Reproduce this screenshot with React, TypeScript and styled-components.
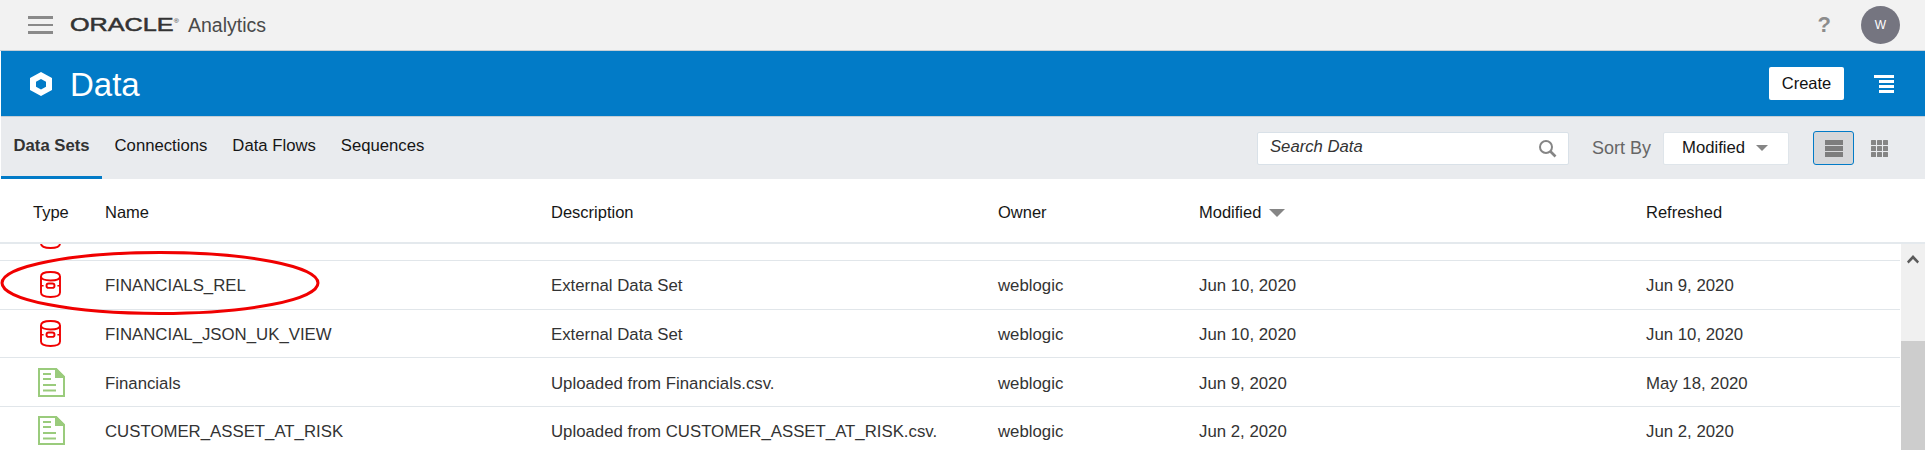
import styled, { createGlobalStyle } from 'styled-components';

const GlobalStyle = createGlobalStyle`
  html, body {
    margin: 0;
    padding: 0;
    height: 450px;
    overflow: hidden;
    background: #fff;
    font-family: "Liberation Sans", Arial, sans-serif;
  }
`;

const Page = styled.div`
  position: relative;
  width: 1925px;
  height: 450px;
  overflow: hidden;
  display: flex;
  flex-direction: column;
`;

const TopBar = styled.header`
  flex: 0 0 50px;
  display: flex;
  align-items: center;
  background: #f2f2f2;
  border-bottom: 1px solid #c4ced6;
  padding: 0 25px 0 28px;
`;

const Burger = styled.div`
  width: 25px;
  display: flex;
  flex-direction: column;
  gap: 5px;
  margin-right: 17px;

  span {
    display: block;
    height: 2.5px;
    background: #8a8a8a;
  }
`;

const OracleMark = styled.span`
  display: inline-block;
  width: 108px;
  font-size: 18px;
  line-height: 20px;
  color: #333;
  -webkit-text-stroke: 0.5px #333;
  transform: scaleX(1.4);
  transform-origin: left center;
  white-space: nowrap;
`;

const Reg = styled.sup`
  font-size: 5px;
  vertical-align: 8px;
  line-height: 0;
  -webkit-text-stroke: 0;
`;

const Product = styled.span`
  margin-left: 10px;
  font-size: 19.5px;
  color: #4a4a4a;
`;

const Help = styled.span`
  margin-left: auto;
  margin-right: 30px;
  font-size: 22px;
  font-weight: bold;
  color: #8c8c8c;
`;

const Avatar = styled.div`
  width: 39px;
  height: 38px;
  border-radius: 50%;
  background: #757580;
  color: #fff;
  font-size: 12px;
  display: flex;
  align-items: center;
  justify-content: center;
`;

const TitleBar = styled.div`
  flex: 0 0 66px;
  display: flex;
  align-items: center;
  background: #027bc7;
  border-bottom: 1px solid #c4ced6;
  box-sizing: border-box;
  padding: 0 31px 0 28px;
  margin-left: 1px;
`;

const Title = styled.h1`
  margin: 2px 0 0 17px;
  font-size: 33px;
  font-weight: normal;
  color: #fff;
`;

const CreateButton = styled.button`
  margin-left: auto;
  margin-right: 30px;
  width: 75px;
  height: 33px;
  padding: 0;
  border: 0;
  border-radius: 2px;
  background: #fff;
  color: #111;
  font-family: inherit;
  font-size: 16.5px;
`;

const TabBar = styled.nav`
  flex: 0 0 62px;
  display: flex;
  align-items: center;
  background: #e9ebee;
  margin-left: 1px;
  padding-right: 25px;
`;

const Tab = styled.a<{ $active?: boolean }>`
  align-self: stretch;
  display: flex;
  align-items: center;
  box-sizing: border-box;
  padding: 0 12.5px 2px;
  font-size: 16.7px;
  font-weight: ${p => (p.$active ? 'bold' : 'normal')};
  color: ${p => (p.$active ? '#333' : '#161616')};
  border-bottom: 3px solid ${p => (p.$active ? '#027bc7' : 'transparent')};
`;

const SearchBox = styled.div`
  margin-left: auto;
  width: 312px;
  height: 33px;
  box-sizing: border-box;
  display: flex;
  align-items: center;
  justify-content: space-between;
  padding: 0 11px 3px 12px;
  background: #fff;
  border: 1px solid #d9e1e8;
  border-radius: 2px;
  font-size: 16.7px;
  font-style: italic;
  color: #333;

  svg {
    margin-top: 3px;
  }
`;

const SortLabel = styled.span`
  margin: 0 12px 0 23px;
  font-size: 18px;
  color: #666;
`;

const SortSelect = styled.div`
  width: 126px;
  height: 33px;
  box-sizing: border-box;
  display: flex;
  align-items: center;
  padding-left: 18px;
  gap: 11px;
  background: #fff;
  border: 1px solid #dfe5ea;
  border-radius: 2px;
  font-size: 16.7px;
  color: #161616;
`;

const Caret = styled.span<{ $size: number; $colour: string }>`
  width: 0;
  height: 0;
  border-left: ${p => p.$size}px solid transparent;
  border-right: ${p => p.$size}px solid transparent;
  border-top: ${p => p.$size}px solid ${p => p.$colour};
`;

const ViewButton = styled.div<{ $active?: boolean }>`
  width: 41px;
  height: 34px;
  box-sizing: border-box;
  display: flex;
  align-items: center;
  justify-content: center;
  border-radius: 3px;
  margin-left: ${p => (p.$active ? '24px' : '5px')};
  background: ${p => (p.$active ? '#d6d7d9' : 'transparent')};
  border: 1px solid ${p => (p.$active ? '#027bc7' : 'transparent')};
`;

const columns = '105px 446px 447px 201px 447px 1fr';

const HeaderRow = styled.div`
  flex: 0 0 65px;
  display: grid;
  grid-template-columns: ${columns};
  align-items: center;
  box-sizing: border-box;
  padding-top: 4px;
  border-bottom: 2px solid #e4e9ed;
  font-size: 16.5px;
  color: #161616;
`;

const HeaderType = styled.span`
  padding-left: 33px;
`;

const HeaderSort = styled.span`
  display: flex;
  align-items: center;
  gap: 8px;
`;

const Body = styled.div`
  flex: 1;
  min-height: 0;
  display: flex;
`;

const List = styled.div`
  flex: 1;
  min-width: 0;
  overflow: hidden;
`;

const ListScroll = styled.div`
  margin-top: -32px;
`;

const Row = styled.div`
  height: 48.75px;
  box-sizing: border-box;
  padding-top: 3px;
  display: grid;
  grid-template-columns: ${columns};
  align-items: center;
  border-bottom: 1.5px solid #e1e6ea;
  margin-right: 1px;
  font-size: 16.8px;
  color: #333;
`;

const IconCell = styled.span`
  display: flex;
  margin-top: -3px;
  padding-left: 40px;
`;

const FileCell = styled(IconCell)`
  padding-left: 38px;
`;

const Scrollbar = styled.div`
  flex: 0 0 24px;
  background: #f0f0f0;
  display: flex;
  flex-direction: column;
  align-items: center;
`;

const ScrollUp = styled.div`
  flex: 0 0 97px;
  padding-top: 11px;
  box-sizing: border-box;
  line-height: 0;
`;

const ScrollThumb = styled.div`
  flex: 1;
  align-self: stretch;
  background: #cdcdcd;
`;

const Highlight = styled.svg`
  position: absolute;
  left: 0;
  top: 250px;
`;

const CubeIcon = () => (
  <svg width="24" height="26" viewBox="0 0 24 26">
    <path d="M12 1 L23 7 V19 L12 25 L1 19 V7 Z M12 8 L7 10.8 V15.8 L12 18.6 L17 15.8 V10.8 Z" fill="#fff" fillRule="evenodd" />
  </svg>
);

const MenuIcon = () => (
  <svg width="20" height="18" viewBox="0 0 20 18">
    <path d="M0 1.5H20M5 6.5H20M5 11.5H20M5 16.5H20" stroke="#fff" strokeWidth="3" />
  </svg>
);

const SearchIcon = () => (
  <svg width="19" height="19" viewBox="0 0 19 19" fill="none">
    <circle cx="8" cy="8" r="6" stroke="#858585" strokeWidth="2" />
    <path d="M12.5 12.5L17.5 17.5" stroke="#858585" strokeWidth="2.6" />
  </svg>
);

const ListIcon = () => (
  <svg width="18" height="17" viewBox="0 0 18 17" fill="#7d7d7d">
    <rect width="18" height="5" />
    <rect y="6" width="18" height="5" />
    <rect y="12" width="18" height="5" />
  </svg>
);

const GridIcon = () => (
  <svg width="17" height="17" viewBox="0 0 17 17" fill="#858585">
    {[0, 6, 12].flatMap(y =>
      [0, 6, 12].map(x => <rect key={`${x}-${y}`} x={x} y={y} width="5" height="5" rx="0.5" />)
    )}
  </svg>
);

const DatabaseIcon = () => (
  <svg width="21" height="27" viewBox="0 0 21 27" fill="none" stroke="#f00000" strokeWidth="1.9">
    <path d="M1 5.5C1 2.5 5 1 10.5 1S20 2.5 20 5.5V21.5C20 24.5 16 26 10.5 26S1 24.5 1 21.5Z" />
    <path d="M1 5.5C1 8 5 9.5 10.5 9.5S20 8 20 5.5" />
    <rect x="6.5" y="12.5" width="8" height="4.4" rx="2.2" />
    <path d="M1 14.7H3.6M17.4 14.7H20" strokeWidth="1.6" />
  </svg>
);

const FileIcon = () => (
  <svg width="27" height="29" viewBox="0 0 27 29" fill="none">
    <path d="M1 1H18L26 9V28H1Z" fill="#fff" stroke="#9acb7c" strokeWidth="2" />
    <path d="M17 0H18.5L27 8.5V10H17Z" fill="#9acb7c" />
    <path d="M5 6H13M5 11H13M5 17H18M5 22.5H18" stroke="#9acb7c" strokeWidth="1.8" />
  </svg>
);

type DataSet = {
  kind: 'db' | 'file';
  name: string;
  description: string;
  modified: string;
  refreshed: string;
};

const rows: DataSet[] = [
  { kind: 'db', name: 'FINANCIALS_REL', description: 'External Data Set', modified: 'Jun 10, 2020', refreshed: 'Jun 9, 2020' },
  { kind: 'db', name: 'FINANCIAL_JSON_UK_VIEW', description: 'External Data Set', modified: 'Jun 10, 2020', refreshed: 'Jun 10, 2020' },
  { kind: 'file', name: 'Financials', description: 'Uploaded from Financials.csv.', modified: 'Jun 9, 2020', refreshed: 'May 18, 2020' },
  { kind: 'file', name: 'CUSTOMER_ASSET_AT_RISK', description: 'Uploaded from CUSTOMER_ASSET_AT_RISK.csv.', modified: 'Jun 2, 2020', refreshed: 'Jun 2, 2020' },
];

const App = () => {
  return (
    <Page>
      <GlobalStyle />
      <TopBar>
        <Burger>
          <span />
          <span />
          <span />
        </Burger>
        <OracleMark>
          ORACLE<Reg>®</Reg>
        </OracleMark>
        <Product>Analytics</Product>
        <Help>?</Help>
        <Avatar>W</Avatar>
      </TopBar>
      <TitleBar>
        <CubeIcon />
        <Title>Data</Title>
        <CreateButton>Create</CreateButton>
        <MenuIcon />
      </TitleBar>
      <TabBar>
        <Tab $active>Data Sets</Tab>
        <Tab>Connections</Tab>
        <Tab>Data Flows</Tab>
        <Tab>Sequences</Tab>
        <SearchBox>
          Search Data
          <SearchIcon />
        </SearchBox>
        <SortLabel>Sort By</SortLabel>
        <SortSelect>
          Modified
          <Caret $size={6} $colour="#858585" />
        </SortSelect>
        <ViewButton $active>
          <ListIcon />
        </ViewButton>
        <ViewButton>
          <GridIcon />
        </ViewButton>
      </TabBar>
      <HeaderRow>
        <HeaderType>Type</HeaderType>
        <span>Name</span>
        <span>Description</span>
        <span>Owner</span>
        <HeaderSort>
          Modified
          <Caret $size={8} $colour="#858585" />
        </HeaderSort>
        <span>Refreshed</span>
      </HeaderRow>
      <Body>
        <List>
          <ListScroll>
            <Row>
              <IconCell>
                <DatabaseIcon />
              </IconCell>
            </Row>
            {rows.map(row => (
              <Row key={row.name}>
                {row.kind === 'db' ? (
                  <IconCell>
                    <DatabaseIcon />
                  </IconCell>
                ) : (
                  <FileCell>
                    <FileIcon />
                  </FileCell>
                )}
                <span>{row.name}</span>
                <span>{row.description}</span>
                <span>weblogic</span>
                <span>{row.modified}</span>
                <span>{row.refreshed}</span>
              </Row>
            ))}
          </ListScroll>
        </List>
        <Scrollbar>
          <ScrollUp>
            <svg width="12" height="9" viewBox="0 0 12 9">
              <path d="M6 0L12 6.5L10.5 8.5L6 4L1.5 8.5L0 6.5Z" fill="#5a5a5a" />
            </svg>
          </ScrollUp>
          <ScrollThumb />
        </Scrollbar>
      </Body>
      <Highlight width="322" height="68" viewBox="0 0 322 68" fill="none">
        <ellipse cx="160" cy="33" rx="158" ry="30.5" stroke="#f00000" strokeWidth="3" />
      </Highlight>
    </Page>
  );
};

export default App;
